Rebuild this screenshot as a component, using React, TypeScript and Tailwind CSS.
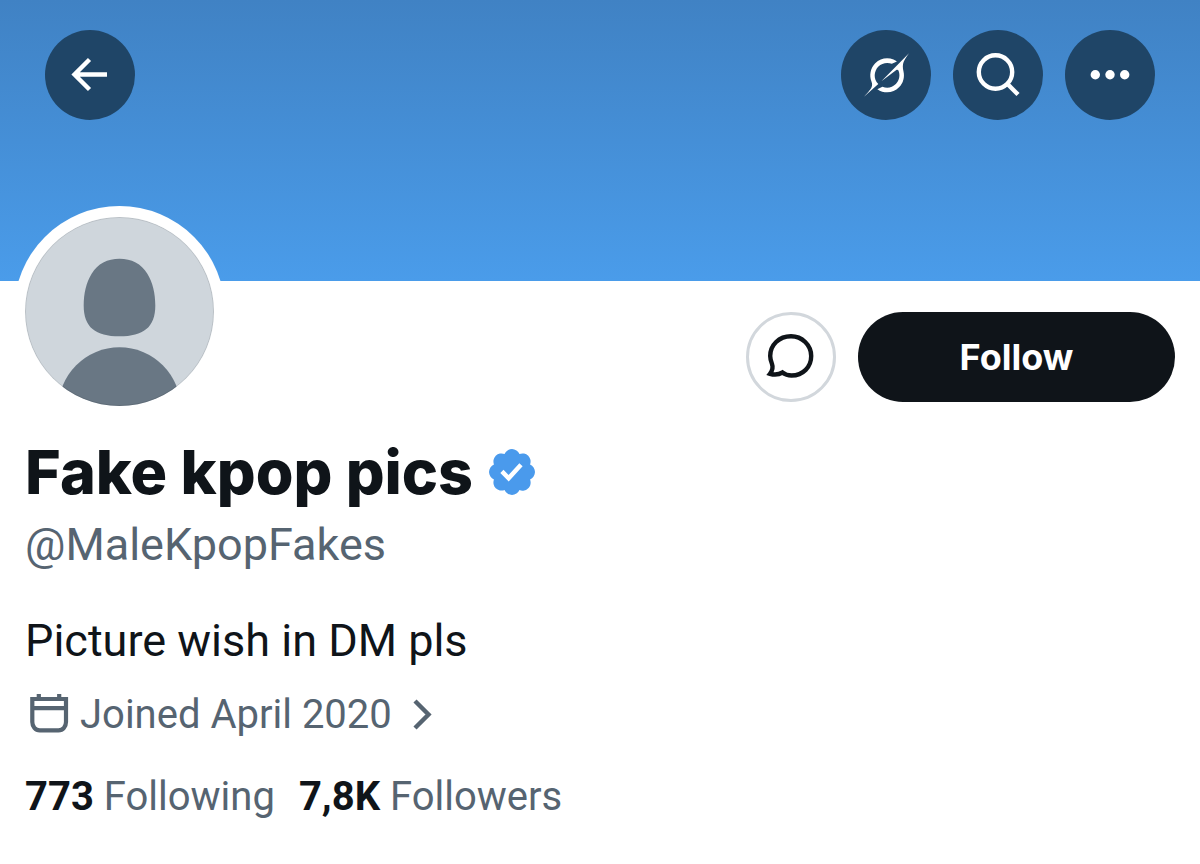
// frontend/src/App.tsx
import { useState } from 'react';

const profile = {
  name: 'Fake kpop pics',
  handle: '@MaleKpopFakes',
  bio: 'Picture wish in DM pls',
  joined: 'Joined April 2020',
  following: '773',
  followers: '7,8K',
};

export default function App() {
  const [isFollowing, setIsFollowing] = useState(false);

  return (
    <div className="min-h-screen bg-white font-['Roboto',sans-serif] text-[#0f1419]">

      {/* Banner */}
      <header className="flex h-[281px] items-start justify-between bg-linear-to-b from-[#4082c4] to-[#4a9cea] px-[45px] pt-[30px]">
        <RoundButton label="Back">
          <svg viewBox="0 0 90 90" className="size-full" fill="none" stroke="currentColor" strokeWidth="4.4">
            <path d="M62 44.5H30M44.5 29.5L29.5 44.5L44.5 59.5" />
          </svg>
        </RoundButton>
        <div className="flex gap-[22px]">
          <RoundButton label="Grok">
            <svg viewBox="0 0 33 32" className="h-11 w-[45px]" fill="currentColor">
              <path d="M12.745 20.54l10.97-8.19c.539-.4 1.307-.244 1.564.38 1.349 3.288.746 7.241-1.938 9.955-2.683 2.714-6.417 3.31-9.83 1.954l-3.728 1.745c5.347 3.697 11.84 2.782 15.898-1.324 3.219-3.255 4.216-7.692 3.284-11.693l.008.009c-1.351-5.878.332-8.227 3.782-13.031L33 0l-4.54 4.59v-.014L12.743 20.544m-2.263 1.987c-3.837-3.707-3.175-9.446.1-12.755 2.42-2.449 6.388-3.448 9.852-1.979l3.72-1.737c-.67-.49-1.53-1.017-2.515-1.387-4.455-1.854-9.789-.931-13.41 2.728-3.483 3.523-4.579 8.94-2.697 13.561 1.405 3.454-.899 5.898-3.22 8.364C1.49 30.2.666 31.074 0 32l10.478-9.466" />
            </svg>
          </RoundButton>
          <RoundButton label="Search">
            <svg viewBox="0 0 90 90" className="size-full" fill="none" stroke="currentColor" strokeWidth="4.4">
              <circle cx="42.5" cy="42" r="16.7" />
              <path d="M54 53.5L65 64.5" />
            </svg>
          </RoundButton>
          <RoundButton label="More">
            <svg viewBox="0 0 90 90" className="size-full" fill="currentColor">
              <circle cx="30.3" cy="44.7" r="4.7" />
              <circle cx="45" cy="44.7" r="4.7" />
              <circle cx="59.7" cy="44.7" r="4.7" />
            </svg>
          </RoundButton>
        </div>
      </header>

      <main className="px-[25px] pb-11">
        {/* Avatar and actions */}
        <div className="flex items-start justify-between">
          <div className="-mt-[75px] -ml-[11px] rounded-full bg-white p-[11px]">
            <div className="size-[189px] overflow-hidden rounded-full bg-[#cfd6dc]">
              <svg viewBox="0 0 190 190" className="size-full" fill="#697784" role="img" aria-label="Profile picture">
                <path d="M95 42C107 42 117 47 123 57C128.5 66 131 77 131 89C131 111 119 120 95 120C71 120 59 111 59 89C59 77 61.5 66 67 57C73 47 83 42 95 42Z" />
                <circle cx="95" cy="192.5" r="61.5" />
                <circle cx="95" cy="95" r="94.5" fill="none" stroke="#000000" strokeOpacity="0.1" />
              </svg>
            </div>
          </div>
          <div className="flex gap-[22px] pt-[31px]">
            <button aria-label="Message" className="size-[90px] rounded-full border-3 border-[#d2d7dc]">
              <svg viewBox="3 3 84 84" className="size-full" fill="none" stroke="currentColor" strokeWidth="4.4">
                <path d="M36.5 60.5C39 62.5 42 63.5 45.5 63.5C57 63.5 65.2 55 65.2 44C65.2 33 56 24.2 45 24.2C33 24.2 24.2 33 24.2 44C24.2 47.5 25 49.5 26 52C27.3 55.5 26.5 58.5 24 61.8C28.5 63.1 33 62.6 36.5 60.5Z" />
              </svg>
            </button>
            <button
              onClick={() => setIsFollowing(!isFollowing)}
              className="h-[90px] w-[317px] rounded-full bg-[#0f1419] font-['Inter',sans-serif] text-[36px] font-bold text-white"
            >
              {isFollowing ? 'Following' : 'Follow'}
            </button>
          </div>
        </div>

        {/* Name and handle */}
        <div className="mt-[15px] flex items-center gap-4">
          <h1 className="font-['Inter',sans-serif] text-[61px] leading-[80px] font-extrabold">{profile.name}</h1>
          <svg viewBox="1.6 1.6 18.8 18.8" className="size-[46px]" fill="#4a9aec" role="img" aria-label="Verified account">
            <path d="M20.396 11c-.018-.646-.215-1.275-.57-1.816-.354-.54-.852-.972-1.438-1.246.223-.607.27-1.264.14-1.897-.131-.634-.437-1.218-.882-1.687-.47-.445-1.053-.75-1.687-.882-.633-.13-1.29-.083-1.897.14-.273-.587-.704-1.086-1.245-1.44S11.647 1.62 11 1.604c-.646.017-1.273.213-1.813.568s-.969.854-1.24 1.44c-.608-.223-1.267-.272-1.902-.14-.635.13-1.22.436-1.69.882-.445.47-.749 1.055-.878 1.688-.13.633-.08 1.29.144 1.896-.587.274-1.087.705-1.443 1.245-.356.54-.555 1.17-.574 1.817.02.647.218 1.276.574 1.817.356.54.856.972 1.443 1.245-.224.606-.274 1.263-.144 1.896.13.634.433 1.218.877 1.688.47.443 1.054.747 1.687.878.633.132 1.29.084 1.897-.136.274.586.705 1.084 1.246 1.439.54.354 1.17.551 1.816.569.647-.016 1.276-.213 1.817-.567s.972-.854 1.245-1.44c.604.239 1.266.296 1.903.164.636-.132 1.22-.447 1.68-.907.46-.46.776-1.044.908-1.681s.075-1.299-.165-1.903c.586-.274 1.084-.705 1.439-1.246.354-.54.551-1.17.569-1.816zM9.662 14.85l-3.429-3.428 1.293-1.302 2.072 2.072 4.4-4.794 1.347 1.246z" />
          </svg>
        </div>
        <p className="mt-[5px] text-[45px] leading-[56px] text-[#566471]">{profile.handle}</p>

        <p className="mt-10 text-[45px] leading-[56px]">{profile.bio}</p>

        <a href="#about" className="mt-[22px] ml-1 flex w-fit items-center text-[40px] leading-[48px] text-[#566471]">
          <svg viewBox="0 0 40 40" className="mr-[11px] size-10 overflow-visible" fill="none" stroke="currentColor" strokeWidth="4.2">
            <path d="M3.3 4H37V27C37 31.5 34 35.3 29.5 35.3H10.8C6.3 35.3 3.3 31.5 3.3 27ZM3.3 13.2H37M9.8 -1V4M30.2 -1V4" />
          </svg>
          {profile.joined}
          <svg viewBox="0 0 20 32" className="ml-[21px] h-8 w-5" fill="none" stroke="currentColor" strokeWidth="4.4">
            <path d="M2 2L15.5 15.5L2 29" />
          </svg>
        </a>

        {/* Follow counts */}
        <div className="mt-[34px] flex gap-6 text-[40px] leading-[48px]">
          <Count href="#following" value={profile.following} label="Following" />
          <Count href="#followers" value={profile.followers} label="Followers" />
        </div>
      </main>
    </div>
  );
}

// Dark round button on the banner
function RoundButton({ label, children }: { label: string; children: React.ReactNode }) {
  return (
    <button aria-label={label} className="flex size-[90px] items-center justify-center rounded-full bg-[#1f4567] text-white">
      {children}
    </button>
  );
}

function Count({ href, value, label }: { href: string; value: string; label: string }) {
  return (
    <a href={href} className="text-[#566471]">
      <span className="font-bold text-[#0f1419]">{value}</span> {label}
    </a>
  );
}
